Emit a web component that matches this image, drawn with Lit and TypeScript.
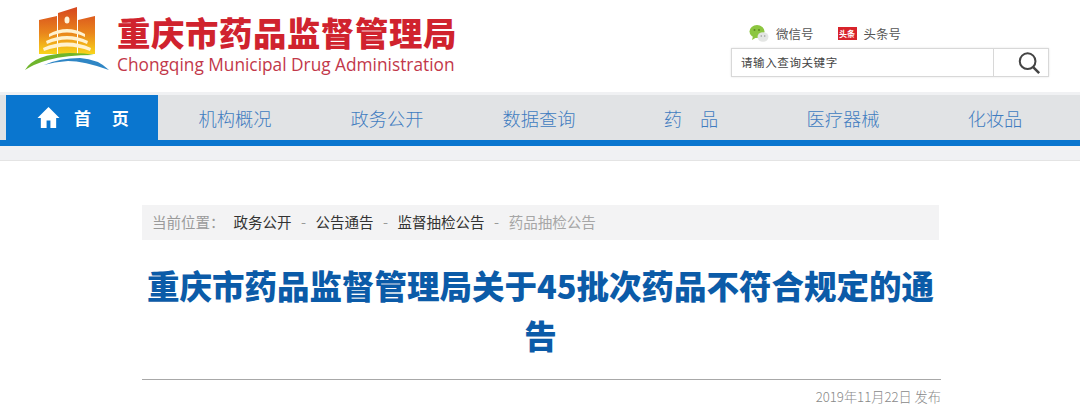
import { LitElement, html, css, svg } from "lit";
import { customElement } from "lit/decorators.js";

const navItems = ["机构概况", "政务公开", "数据查询", "药\u3000品", "医疗器械", "化妆品"];

const logo = svg`
  <defs>
    <linearGradient id="wall" x1="0" y1="0" x2="0" y2="1">
      <stop offset="0" stop-color="#d6461f" />
      <stop offset="0.55" stop-color="#e9851c" />
      <stop offset="1" stop-color="#f9d51a" />
    </linearGradient>
  </defs>
  <path d="M39 20L57 16V54H39ZM58 13L77 7V54H58ZM78 20L95 16V54H78Z" fill="url(#wall)" />
  <ellipse cx="67" cy="20" rx="2.5" ry="3.5" fill="#fff3d8" />
  <path d="M49 34Q67 24 85 34V37Q67 28 49 37Z" fill="#fff2d0" />
  <path d="M46 41Q67 31 88 41L87 44Q67 35 47 44Z" fill="#fff2d0" />
  <path d="M43 48Q67 37 91 48L90 51Q67 42 44 51Z" fill="#fff2d0" />
  <path d="M25 70Q34 54 70 53Q86 53 94 55Q66 55 48 60Q34 64 25 70Z" fill="#6fb52c" />
  <path d="M44 65Q60 58 80 58Q98 59 109 70Q84 61 68 61Q54 62 44 65Z" fill="#2f86c5" />
`;

const wechat = svg`
  <ellipse cx="8" cy="7.5" rx="7.5" ry="6.5" fill="#8cc63f" />
  <path d="M4 12L3 16L8 13Z" fill="#8cc63f" />
  <circle cx="5.5" cy="6" r="1" fill="#5d8a22" />
  <circle cx="10" cy="6" r="1" fill="#5d8a22" />
  <ellipse cx="14" cy="13" rx="5.5" ry="4.8" fill="#e4e6e4" />
  <circle cx="12.3" cy="12" r="0.8" fill="#9a9a9a" />
  <circle cx="15.7" cy="12" r="0.8" fill="#9a9a9a" />
`;

@customElement("app-root")
export class AppRoot extends LitElement {
  static styles = css`
    :host {
      display: block;
      width: 1080px;
      height: 410px;
      overflow: hidden;
      background: #fff;
      font-family: "Liberation Sans", "Noto Sans CJK SC", sans-serif;
    }

    .top {
      display: flex;
      justify-content: space-between;
      height: 92px;
      box-sizing: border-box;
      padding: 0 31px 0 25px;
    }

    .brand {
      display: flex;
      gap: 6px;
      padding-top: 6px;
    }

    .logo {
      width: 86px;
      height: 68px;
      flex: none;
    }

    .brand-name {
      padding-top: 6px;
      font-family: "Noto Sans CJK SC", sans-serif;
      font-size: 33.4px;
      line-height: 40px;
      font-weight: 900;
      letter-spacing: 0.6px;
      color: #d0232e;
      white-space: nowrap;
    }

    .brand-en {
      margin-top: 2px;
      font-family: "Open Sans", sans-serif;
      font-size: 17.3px;
      line-height: 22px;
      font-weight: 400;
      letter-spacing: 0;
      color: #c2384a;
    }

    .tools {
      width: 318px;
      padding-top: 22px;
      font-family: "Noto Sans CJK SC", sans-serif;
    }

    .social {
      display: flex;
      align-items: center;
      height: 22px;
      padding-left: 18px;
      font-size: 12.5px;
      color: #555;
    }

    .social svg {
      width: 20px;
      height: 18px;
      margin-right: 7px;
    }

    .badge {
      width: 19px;
      height: 13px;
      margin: 0 7px 0 24px;
      background: #d8232a;
      color: #fff;
      font-size: 8px;
      line-height: 13px;
      font-weight: 700;
      text-align: center;
      overflow: hidden;
    }

    .search {
      display: flex;
      height: 29px;
      margin-top: 4px;
      box-sizing: border-box;
      border: 1px solid #d8d8d8;
      box-shadow: 0 0 2px #e4e4e4;
    }

    .field {
      flex: 1;
      padding-left: 9px;
      border-right: 1px solid #d8d8d8;
      font-size: 11.5px;
      line-height: 27px;
      letter-spacing: 0.6px;
      color: #444;
    }

    .glass {
      width: 54px;
      box-sizing: border-box;
      padding-right: 7px;
      display: flex;
      align-items: center;
      justify-content: flex-end;
    }

    .glass svg {
      width: 24px;
      height: 24px;
    }

    .nav-wrap {
      height: 69px;
      padding-top: 3px;
      background: #f0f1f3;
      border-bottom: 1px solid #e4e4e4;
      box-sizing: border-box;
    }

    .nav {
      display: flex;
      height: 51px;
      padding-left: 6px;
      box-sizing: border-box;
      background: #e1e3e5;
      border-bottom: 6px solid #0a76cf;
    }

    .home {
      display: flex;
      align-items: center;
      width: 152px;
      height: 50px;
      flex: none;
      box-sizing: border-box;
      padding: 0 0 6px 31px;
      background: #0a76cf;
      color: #fff;
      font-family: "Noto Sans CJK SC", sans-serif;
      font-size: 17px;
      font-weight: 700;
    }

    .home svg {
      width: 23px;
      height: 23px;
      margin-right: 14px;
    }

    .nav-item {
      width: 152px;
      flex: none;
      font-family: "Noto Sans CJK SC", sans-serif;
      font-size: 18.2px;
      line-height: 47px;
      font-weight: 300;
      text-align: center;
      text-indent: 2px;
      color: #3f7cc0;
    }

    .article {
      width: 797px;
      margin-left: 142px;
      padding-top: 44px;
      font-family: "Noto Sans CJK SC", sans-serif;
    }

    .crumbs {
      display: flex;
      align-items: center;
      height: 35px;
      padding: 0 0 3px 10px;
      box-sizing: border-box;
      background: #f3f3f4;
      font-size: 14.5px;
      font-weight: 400;
      color: #333;
    }

    .crumbs .here {
      color: #9a9a9a;
      margin-right: 9px;
    }

    .crumbs .sep {
      color: #999;
      margin: 0 9.5px;
    }

    .crumbs .last {
      color: #a6a6a6;
    }

    h1 {
      margin: 20px 0 19px;
      font-size: 32.5px;
      line-height: 50px;
      font-weight: 900;
      text-align: center;
      color: #0b5ba8;
    }

    .meta {
      margin-right: -2px;
      border-top: 1px solid #a8a8a8;
      padding-top: 8px;
      font-size: 13.2px;
      line-height: 18px;
      font-weight: 300;
      text-align: right;
      color: #888;
    }
  `;

  render() {
    return html`
      <div class="top">
        <div class="brand">
          <svg class="logo" viewBox="25 6 86 68">${logo}</svg>
          <div class="brand-name">
            重庆市药品监督管理局
            <div class="brand-en">Chongqing Municipal Drug Administration</div>
          </div>
        </div>
        <div class="tools">
          <div class="social">
            <svg viewBox="0 0 20 18">${wechat}</svg>微信号
            <span class="badge">头条</span>头条号
          </div>
          <div class="search">
            <div class="field">请输入查询关键字</div>
            <div class="glass">
              <svg viewBox="0 0 26 26" fill="none" stroke="#444" stroke-width="2.2">
                <circle cx="11.5" cy="11" r="8.5" />
                <path d="M17.5 17.5L24 24" stroke-width="2.8" />
              </svg>
            </div>
          </div>
        </div>
      </div>
      <div class="nav-wrap">
        <nav class="nav">
          <div class="home">
            <svg viewBox="0 0 24 24" fill="#fff">
              <path d="M12 1L0.5 12.5H4V23H10V15H14V23H20V12.5H23.5Z" />
            </svg>
            <span>首\u3000\u00a0页</span>
          </div>
          ${navItems.map((item) => html`<div class="nav-item">${item}</div>`)}
        </nav>
      </div>
      <main class="article">
        <div class="crumbs">
          <span class="here">当前位置：</span>
          <span>政务公开</span><span class="sep">-</span>
          <span>公告通告</span><span class="sep">-</span>
          <span>监督抽检公告</span><span class="sep">-</span>
          <span class="last">药品抽检公告</span>
        </div>
        <h1>重庆市药品监督管理局关于45批次药品不符合规定的通告</h1>
        <div class="meta">2019年11月22日 发布</div>
      </main>
    `;
  }
}
